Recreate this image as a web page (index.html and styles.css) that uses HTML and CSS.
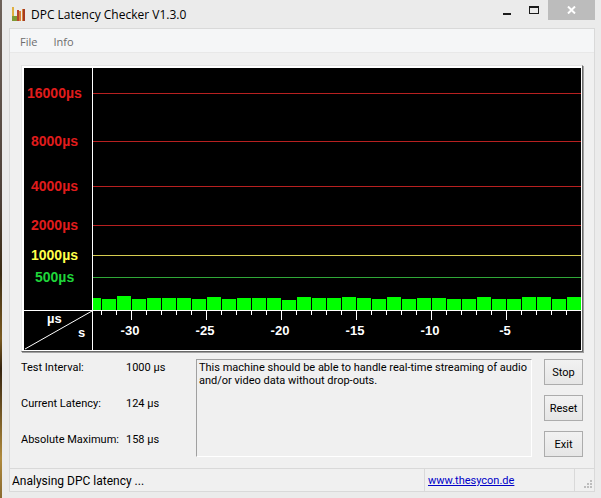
FILE: index.html
```html
<!DOCTYPE html>
<html lang="en">
  <head>
    <meta charset="UTF-8" />
    <meta name="viewport" content="width=device-width, initial-scale=1.0" />
    <title>DPC Latency Checker V1.3.0</title>
    <link rel="stylesheet" href="styles.css">
  </head>
  <body>
    <div class="window">
      <header class="title-bar">
        <svg class="app-icon" width="15" height="16" viewBox="0 0 15 16" aria-hidden="true">
          <path d="M1 1h2v13H1z" fill="#e0b040" />
          <path d="M1 10h5v5H1z" fill="#7f9a35" />
          <path d="M6 4h2v11H6z" fill="#b8452c" />
          <path d="M8 5h2v10H8z" fill="#d9803a" />
          <path d="M11 3h3v12h-3z" fill="#a63a22" />
          <path d="M11 3h1v12h-1z" fill="#d98a3a" />
        </svg>
        <h1>DPC Latency Checker V1.3.0</h1>
        <button class="caption-btn" aria-label="Minimize">
          <svg width="11" height="9" viewBox="0 0 11 9"><path d="M1 7h8v2H1z" fill="#1c1c1c" /></svg>
        </button>
        <button class="caption-btn" aria-label="Maximize">
          <svg width="11" height="9" viewBox="0 0 11 9"><path d="M0 0h10v8H0zM1 2v5h8V2z" fill="#1c1c1c" fill-rule="evenodd" /></svg>
        </button>
        <button class="caption-btn close" aria-label="Close">
          <svg width="9" height="8" viewBox="0 0 9 8"><path d="M1 .5l7 7M8 .5l-7 7" stroke="#fff" stroke-width="2" /></svg>
        </button>
      </header>

      <main class="client">
        <nav class="menu">
          <button>File</button>
          <button>Info</button>
        </nav>

        <div class="content">
          <div class="chart">
            <svg viewBox="0 0 557 282" role="img" aria-label="DPC latency over time">
              <g class="scale red">
                <text x="3" y="30">16000µs</text>
                <text x="7" y="78">8000µs</text>
                <text x="7" y="123">4000µs</text>
                <text x="7" y="162">2000µs</text>
              </g>
              <text class="scale yellow" x="7" y="192">1000µs</text>
              <text class="scale green" x="11" y="214">500µs</text>

              <path class="grid-red" d="M69 25.5h488M69 73.5h488M69 118.5h488M69 157.5h488" />
              <path class="grid-yellow" d="M69 187.5h488" />
              <path class="grid-green" d="M69 209.5h488" />

              <g id="bars" class="bars"></g>
              <path id="ticks" class="axis" />
              <path class="axis" d="M68.5 0v282M0 242.5h557" />
              <path class="axis" d="M1 281L68 243" />

              <g class="unit">
                <text x="23" y="255">µs</text>
                <text x="54" y="269">s</text>
              </g>
              <g class="unit time">
                <text x="106" y="267">-30</text>
                <text x="181" y="267">-25</text>
                <text x="256" y="267">-20</text>
                <text x="331" y="267">-15</text>
                <text x="406" y="267">-10</text>
                <text x="481" y="267">-5</text>
              </g>
            </svg>
          </div>

          <div class="panel">
            <dl class="readings">
              <dt>Test Interval:</dt>
              <dd>1000 µs</dd>
              <dt>Current Latency:</dt>
              <dd>124 µs</dd>
              <dt>Absolute Maximum:</dt>
              <dd>158 µs</dd>
            </dl>
            <textarea class="message" aria-label="Result" readonly>This machine should be able to handle real-time streaming of audio and/or video data without drop-outs.</textarea>
            <div class="actions">
              <button>Stop</button>
              <button>Reset</button>
              <button>Exit</button>
            </div>
          </div>
        </div>

        <footer class="status-bar">
          <span class="status-text">Analysing DPC latency ...</span>
          <span class="status-link"><a href="http://www.thesycon.de">www.thesycon.de</a></span>
          <svg class="grip" width="10" height="10" viewBox="0 0 10 10" aria-hidden="true">
            <path d="M7 1h2v2H7zM4 4h2v2H4zM7 4h2v2H7zM1 7h2v2H1zM4 7h2v2H4zM7 7h2v2H7z" fill="#bdbdbd" />
          </svg>
        </footer>
      </main>
    </div>

    <script>
      // Bar heights, oldest reading first. One bar per second.
      const heights = [
        12, 11, 14, 11, 12, 12, 12, 11, 13, 11, 12, 12, 12, 10, 13, 12, 12,
        13, 12, 11, 13, 11, 12, 12, 11, 11, 13, 11, 11, 13, 13, 11, 13,
      ];
      const step = 15;
      const first = 77;
      const base = 242;
      const bars = document.getElementById("bars");
      let ticks = "";

      heights.forEach(function (height, i) {
        const left = i === 0 ? 69 : first + 1 + (i - 1) * step;
        const right = first + i * step;
        const rect = document.createElementNS("http://www.w3.org/2000/svg", "rect");
        rect.setAttribute("x", left);
        rect.setAttribute("y", base - height);
        rect.setAttribute("width", right - left);
        rect.setAttribute("height", height);
        bars.appendChild(rect);

        if (i < heights.length - 1) {
          // every fifth second gets a long tick
          const length = i % 5 === 2 ? 9 : 4;
          ticks += `M${right + 0.5} ${base + 1}v${length}`;
        }
      });
      document.getElementById("ticks").setAttribute("d", ticks);
    </script>
  </body>
</html>
```

FILE: styles.css
```css
* {
  box-sizing: border-box;
}

body {
  margin: 0;
  padding-left: 2px;
  min-height: 100vh;
  display: flex;
  background: linear-gradient(#6e625a 0%, #4d4038 40%, #3c2c14 55%, #7a5a20 68%, #35240f 74%, #b08a3c 92%, #8a6a30 100%);
  font-family: Roboto, Tahoma, sans-serif;
  font-size: 11px;
  color: #000;
}

button {
  font: inherit;
  color: inherit;
  padding: 0;
  border: none;
  background: none;
}

.window {
  flex: 1;
  display: flex;
  flex-direction: column;
  padding: 0 6px 6px 7px;
  background: #ebebeb;
}

/* Title bar */
.title-bar {
  display: flex;
  align-items: flex-start;
  height: 28px;
}

.app-icon {
  margin: 6px 5px 0 2px;
}

h1 {
  flex: 1;
  margin: 5px 0 0;
  font-family: "Open Sans", "Segoe UI", sans-serif;
  font-size: 12px;
  font-weight: 400;
  line-height: 20px;
}

.caption-btn {
  display: flex;
  align-items: center;
  justify-content: center;
  width: 27px;
  height: 20px;
}

.close {
  width: 47px;
  background: #bcbcbc;
}

/* Client area */
.client {
  flex: 1;
  display: flex;
  flex-direction: column;
  border: 1px solid #d9d9d9;
  background: #f0f0f0;
}

.menu {
  display: flex;
  gap: 16px;
  height: 24px;
  padding: 2px 0 0 10px;
  border-bottom: 1px solid #e8e8e8;
  background: #f5f6f7;
  font-family: "Open Sans", "Segoe UI", sans-serif;
  color: #6d6d6d;
}

.content {
  flex: 1;
  padding: 12px 11px 10px;
}

.chart {
  padding: 2px 1px 1px 2px;
  border: 1px solid;
  border-color: #e3e3e3 #696969 #696969 #e3e3e3;
  background: #fff;
  box-shadow: 1px 1px #a0a0a0;
}

.chart svg {
  display: block;
  width: 100%;
  background: #000;
}

.scale {
  font: bold 14px "Liberation Sans", Arial, sans-serif;
}

.red {
  fill: #e01c1c;
}

.yellow {
  fill: #ffff4a;
}

.green {
  fill: #1fd53a;
}

.grid-red {
  stroke: #b82020;
}

.grid-yellow {
  stroke: #d6cc50;
}

.grid-green {
  stroke: #2fa838;
}

.bars {
  fill: #00ff00;
}

.axis {
  fill: none;
  stroke: #fff;
}

.unit {
  font: bold 13px "Liberation Sans", Arial, sans-serif;
  fill: #fff;
}

.time {
  text-anchor: middle;
}

/* Readings, message and buttons */
.panel {
  display: grid;
  grid-template-columns: 175px 1fr 39px;
  margin-top: 7px;
}

.readings {
  display: grid;
  grid-template-columns: 105px 1fr;
  align-content: start;
  row-gap: 20px;
  margin: 0;
  padding-top: 1px;
  line-height: 16px;
}

.readings dd {
  margin: 0;
}

.message {
  height: 98px;
  margin-right: 12px;
  padding: 1px 2px;
  border: 1px solid;
  border-color: #a0a0a0 #fff #fff #a0a0a0;
  background: #f0f0f0;
  font: inherit;
  line-height: 13px;
  color: inherit;
  resize: none;
  outline: none;
}

.actions {
  display: flex;
  flex-direction: column;
  justify-content: space-between;
}

.actions button {
  height: 26px;
  border: 1px solid #acacac;
  background: linear-gradient(#f2f2f2, #e6e6e6);
}

/* Status bar */
.status-bar {
  display: flex;
  height: 23px;
  border-top: 1px solid #d9d9d9;
  line-height: 24px;
}

.status-text {
  flex: 1;
  padding-left: 2px;
  font-size: 12px;
}

.status-link {
  width: 151px;
  padding-left: 3px;
  border: solid #d9d9d9;
  border-width: 0 1px;
}

.status-link a {
  color: #0000c8;
}

.grip {
  align-self: flex-end;
  margin: 0 1px 2px 8px;
}
```
